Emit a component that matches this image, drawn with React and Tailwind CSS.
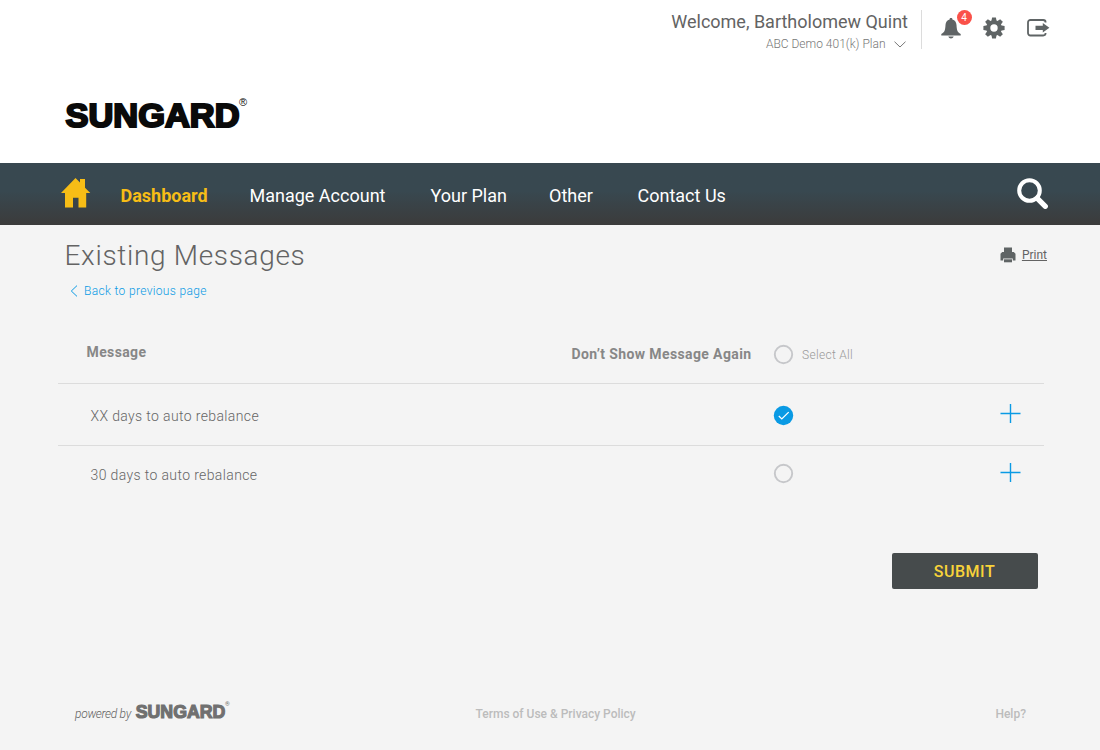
import React from "react";

function Wordmark({ width, height, color, markClass }) {
  return (
    <span className="flex items-start">
      <svg width={width} height={height} viewBox="0 0 176 36" preserveAspectRatio="none" aria-label="Sungard" className="block shrink-0 overflow-visible">
        <text x="1.5" y="29.800" textLength="175" lengthAdjust="spacingAndGlyphs" fontFamily="Liberation Sans, Arial, sans-serif" fontWeight="700" fontSize="34" fill={color} stroke={color} strokeWidth="2.2">SUNGARD</text>
      </svg>
      <span className={markClass}>®</span>
    </span>
  );
}

function Radio({ checked }) {
  return (
    <svg width="21" height="21" viewBox="0 0 21 21" className="block shrink-0">
      {checked ? (
        <>
          <circle cx="10.500" cy="10.500" r="9.700" fill="#0a9ae4" />
          <path d="M5.800 11.100 8.800 13.900 15.700 7.100" fill="none" stroke="#fff" strokeWidth="1.3" />
        </>
      ) : (
        <circle cx="10.500" cy="10.500" r="8.700" fill="none" stroke="#c6c7ca" strokeWidth="1.9" />
      )}
    </svg>
  );
}

function Plus() {
  return (
    <svg width="21" height="21" viewBox="0 0 21 21" className="block shrink-0">
      <path d="M0.5 10.5h20M10.5 1v19" fill="none" stroke="#0a9ae4" strokeWidth="1.4" />
    </svg>
  );
}

function Bell() {
  return (
    <svg width="20" height="21" viewBox="0 0 20 21" fill="#5f6465" className="block">
      <path d="M10 0c.9 0 1.4.5 1.4 1.4 2.7.7 4 2.8 4.1 5.6.2 4.500.8 7.500 4.200 9v1.600H.3V16c3.400-1.500 4-4.500 4.200-9 .1-2.800 1.400-4.900 4.100-5.600C8.600.5 9.100 0 10 0Z" />
      <path d="M7.300 18.600h5.400c-.4 1.300-1.500 1.900-2.700 1.900s-2.300-.6-2.700-1.900Z" />
    </svg>
  );
}

function Gear() {
  return (
    <svg width="22" height="22" viewBox="-11 -11 22 22" fill="#5f6465" className="block">
      {[0, 45, 90, 135, 180, 225, 270, 315].map((a) => (
        <path key={a} d="M-2.700-6.500-1.900-10.600H1.900L2.700-6.500Z" transform={`rotate(${a})`} />
      ))}
      <path fillRule="evenodd" d="M0-7.800a7.800 7.800 0 1 0 0 15.600a7.800 7.800 0 1 0 0-15.600ZM0-3.700a3.700 3.700 0 1 1 0 7.400a3.700 3.700 0 1 1 0-7.400Z" />
    </svg>
  );
}

function Exit() {
  return (
    <svg width="23" height="18" viewBox="0 0 23 18" className="block">
      <path d="M18.600 3.600V3.400A2.400 2.400 0 0 0 16.200 1H3.400A2.400 2.400 0 0 0 1 3.400v10.700a2.400 2.400 0 0 0 2.400 2.400h12.800a2.400 2.400 0 0 0 2.400-2.400v-.2" fill="none" stroke="#5f6465" strokeWidth="1.800" />
      <path d="M8.500 6.700h7.300V4l6.600 4.800-6.600 4.800v-2.700H8.500Z" fill="#5f6465" />
    </svg>
  );
}

function Row({ label, checked, className, radioClass }) {
  return (
    <div className={className}>
      <span className="w-[683px] pt-[3px] pl-[0.5px] text-sm leading-5 font-light tracking-[0.37px] text-[#666]">{label}</span>
      <span className={radioClass}><Radio checked={checked} /></span>
      <span className="ml-auto"><Plus /></span>
    </div>
  );
}

export default function App() {
  return (
    <div className="flex h-[750px] w-[1100px] flex-col overflow-hidden bg-[#f4f4f4] font-['Roboto',sans-serif] whitespace-nowrap">
      <header className="flex h-[163px] items-start justify-between bg-white pl-16">
        <div className="pt-[97px]">
          <Wordmark width="175" height="36" color="#0a0a0a" markClass="text-[11px] leading-[11px] text-[#0a0a0a] font-['Liberation_Sans',sans-serif]" />
        </div>
        <div className="flex pt-[10px] pr-[50px]">
          <div className="flex flex-col items-end pr-[13px]">
            <div className="text-lg leading-6 text-[#636363]">Welcome, Bartholomew Quint</div>
            <div className="flex items-center pr-[2px] text-xs leading-5 font-light text-[#777]">
              ABC Demo 401(k) Plan
              <svg width="12" height="7" viewBox="0 0 12 7" className="ml-[8.500px]"><path d="M.5.7 6 6 11.500.7" fill="none" stroke="#777" /></svg>
            </div>
          </div>
          <div className="flex h-[39px] border-l border-[#dcdcdc]">
            <div className="relative mt-2 ml-[18.500px]">
              <Bell />
              <span className="absolute -top-2 left-4 flex h-[15px] w-[15px] items-center justify-center rounded-full bg-[#fa5149] text-[10px] leading-none text-white">4</span>
            </div>
            <div className="mt-[7px] ml-[22px]"><Gear /></div>
            <div className="mt-[9px] ml-[22.500px]"><Exit /></div>
          </div>
        </div>
      </header>

      <nav className="flex h-[62px] items-center bg-linear-to-b from-[#384850] from-45% to-[#3b3b3b] pr-[52.500px] pl-[61px] text-lg text-white">
        <svg width="30" height="30" viewBox="0 0 30 30" className="mb-[2px] block" fill="#f7bd16">
          <path d="M0 15 14.500 0 19 4.600V1h5v8.700l5.300 5.300H25.200V29.500H17.500V19.800H12V29.500H4V15Z" />
        </svg>
        <div className="flex pt-1 leading-6">
          <a className="ml-[29.5px] w-[129px] font-bold text-[#f7bd16]">Dashboard</a>
          <a className="w-[181px]">Manage Account</a>
          <a className="w-[118.500px]">Your Plan</a>
          <a className="w-[88.500px]">Other</a>
          <a>Contact Us</a>
        </div>
        <svg width="31" height="31" viewBox="0 0 31 31" className="mb-px ml-auto block" fill="none" stroke="#fff">
          <circle cx="12.500" cy="12.500" r="10.300" strokeWidth="4" />
          <path d="m20.300 20.300 8 8" strokeWidth="5.200" strokeLinecap="round" />
        </svg>
      </nav>

      <main className="flex flex-col">
        <div className="flex h-[94px] justify-between pr-[53px] pl-[64px]">
          <div className="pt-[13px]">
            <h1 className="pl-[0.5px] text-[28px] leading-9 font-light tracking-[0.68px] text-[#636363]">Existing Messages</h1>
            <a className="mt-[7px] flex items-center pl-[6px] text-xs leading-5 tracking-[0.34px] text-[#0a9ae4]">
              <svg width="8" height="12" viewBox="0 0 8 12" className="mr-[6px] mb-px"><path d="M7 .6 1.300 6 7 11.400" fill="none" stroke="#0a9ae4" /></svg>
              <span className="font-light">Back to previous page</span>
            </a>
          </div>
          <a className="mt-[10px] flex h-5 items-center pt-[20px] text-xs text-[#636363]">
            <svg width="16" height="16" viewBox="0 0 16 16" fill="#5f6465" className="mr-[6px]">
              <path d="M4 .5h8v4.500h1.800L15.500 6.800V13.500H12.800v-2H3.200v2H.5V6.800L2.200 5H4Z" />
              <path d="M4 12.300h8V15.300H4Z" />
            </svg>
            <span className="underline underline-offset-1">Print</span>
          </a>
        </div>

        <section className="mr-[56px] ml-[58px]">
          <div className="flex h-[65px] items-start border-b border-[#dcdcdc] pt-[25px] pl-[28.500px] text-sm font-bold tracking-[0.38px] text-[#878787]">
            <span className="w-[485px] leading-4">Message</span>
            <span className="w-[201.500px] pt-[2px] leading-4">Don’t Show Message Again</span>
            <Radio />
            <span className="pt-[3px] pl-2 text-xs leading-4 font-light tracking-[0.3px] text-[#999]">Select All</span>
          </div>
          <Row label="XX days to auto rebalance" checked radioClass="pt-[2px]" className="flex h-[62px] items-start border-b border-[#dcdcdc] pt-[19px] pr-[23px] pl-8" />
          <Row label="30 days to auto rebalance" radioClass="pt-px" className="flex h-[62px] items-start pt-4 pr-[23px] pl-8" />
        </section>

        <div className="mt-[45px] flex justify-end pr-[62px]">
          <button className="h-9 w-[146px] rounded-[2px] bg-[#464b4c] pt-px pr-px text-base font-medium tracking-[0.5px] text-[#f8d33a]">SUBMIT</button>
        </div>
      </main>

      <footer className="mt-[112px] flex items-start pr-[74px] pl-[75px] text-xs leading-4 text-[#bcbcbc]">
        <span className="w-[60px] pt-[5px] font-light tracking-[-0.3px] text-[#636363] italic">powered by</span>
        <Wordmark width="90" height="20" color="#707070" markClass="w-[6px] text-[6px] leading-[6px] text-[#707070]" />
        <span className="ml-[244.500px] pt-[5px] font-medium">Terms of Use &amp; Privacy Policy</span>
        <span className="ml-auto pt-[5px] font-medium">Help?</span>
      </footer>
    </div>
  );
}
